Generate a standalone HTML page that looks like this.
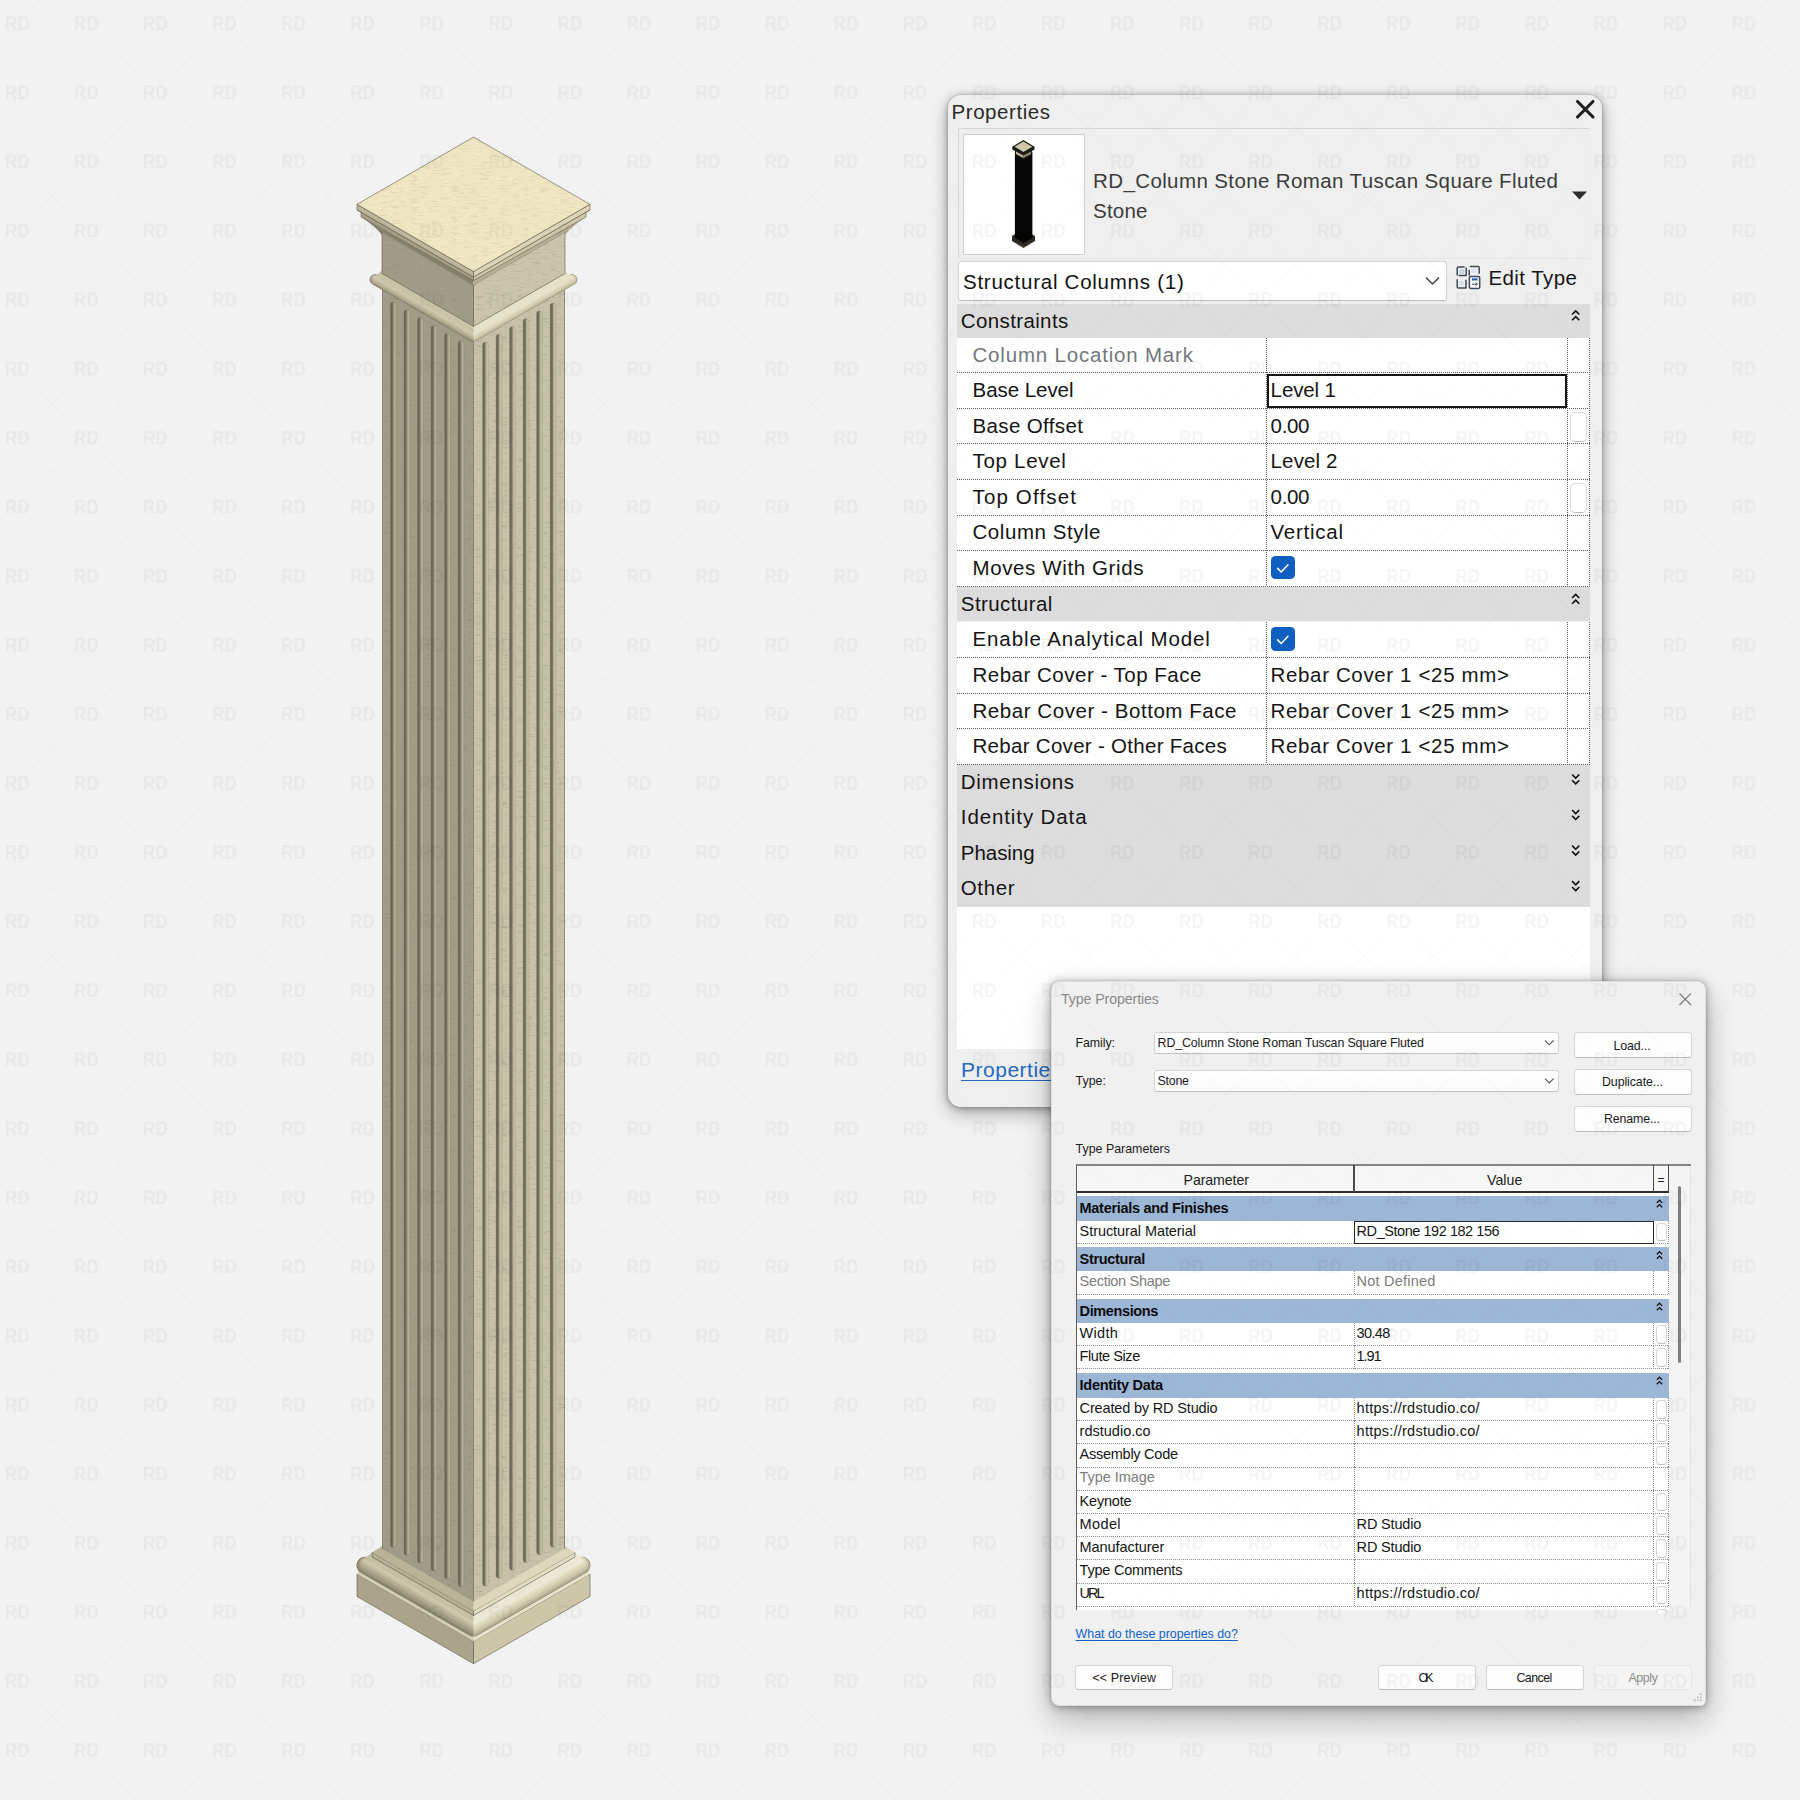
<!DOCTYPE html>
<html lang="en"><head><meta charset="utf-8"><title>RD_Column Stone Roman Tuscan Square Fluted</title>
<style>
html,body{margin:0;padding:0}
body{width:1800px;height:1800px;position:relative;overflow:hidden;background:#f2f2f2;font-family:"Liberation Sans",Arial,sans-serif}
.t{position:absolute;white-space:pre;margin:0;padding:0;display:block}
.b{position:absolute;box-sizing:border-box}
svg{position:absolute;left:0;top:0;overflow:visible}
a.t{text-decoration:none}
</style></head><body>

<svg width="1800" height="1800" viewBox="0 0 1800 1800">
<defs>
<linearGradient id="flL" x1="0" x2="1" y1="0" y2="0"><stop offset="0" stop-color="#5f5b4a"/><stop offset=".38" stop-color="#787460"/><stop offset=".58" stop-color="#a39d85"/><stop offset="1" stop-color="#c4bea4"/></linearGradient>
<linearGradient id="flR" x1="0" x2="1" y1="0" y2="0"><stop offset="0" stop-color="#615d4c"/><stop offset=".4" stop-color="#7c7763"/><stop offset=".62" stop-color="#b3ad93"/><stop offset="1" stop-color="#d9d3b9"/></linearGradient>
<clipPath id="cl"><rect x="300" y="100" width="173.5" height="1600"/></clipPath>
<clipPath id="cr"><rect x="473.5" y="100" width="173.5" height="1600"/></clipPath>
<filter id="grain" x="0" y="0" width="100%" height="100%"><feTurbulence type="fractalNoise" baseFrequency="0.1 0.6" numOctaves="3" seed="7" result="n"/><feColorMatrix in="n" type="matrix" values="0 0 0 0 0.5  0 0 0 0 0.46  0 0 0 0 0.32  0 0 0 -3.0 1.4"/><feComposite in2="SourceGraphic" operator="in"/></filter>
<filter id="grain2" x="0" y="0" width="100%" height="100%"><feTurbulence type="fractalNoise" baseFrequency="0.12 0.55" numOctaves="3" seed="3" result="n"/><feColorMatrix in="n" type="matrix" values="0 0 0 0 0.25  0 0 0 0 0.23  0 0 0 0 0.16  0 0 0 -3.2 1.42"/><feComposite in2="SourceGraphic" operator="in"/></filter>
</defs>
<polygon points="357.0,1574.0 473.5,1641.2 590.0,1574.0 473.5,1506.8" fill="#ddd7bb"/>
<polygon points="357.0,1574.0 473.5,1641.2 473.5,1663.7 357.0,1596.5" fill="#aaa48a" stroke="#5e5947" stroke-width=".8" stroke-opacity=".75" stroke-linejoin="round"/>
<polygon points="590.0,1574.0 473.5,1641.2 473.5,1663.7 590.0,1596.5" fill="#cdc6a9" stroke="#5e5947" stroke-width=".8" stroke-opacity=".75" stroke-linejoin="round"/>
<polygon points="357.0,1574.0 473.5,1641.2 473.5,1636.2 360.0,1570.0" fill="#d3cdb1"/>
<polygon points="590.0,1574.0 473.5,1641.2 473.5,1636.2 587.0,1570.0" fill="#e7e2ca"/>
<g clip-path="url(#cl)">
<path d="M365.2,1565.3 L473.5,1627.8 L581.8,1565.3" fill="none" stroke="#6f6b57" stroke-width="17.3" stroke-linecap="round" stroke-linejoin="round"/>
<path d="M365.2,1565.3 L473.5,1627.8 L581.8,1565.3" fill="none" stroke="#8d8871" stroke-width="16.2" stroke-linecap="round" stroke-linejoin="round"/>
<path d="M365.2,1564.1 L473.5,1626.6 L581.8,1564.1" fill="none" stroke="#a19b82" stroke-width="13.5" stroke-linecap="round" stroke-linejoin="round"/>
<path d="M365.2,1562.7 L473.5,1625.2 L581.8,1562.7" fill="none" stroke="#b3ad93" stroke-width="10" stroke-linecap="round" stroke-linejoin="round"/>
<path d="M365.2,1561.5 L473.5,1624.0 L581.8,1561.5" fill="none" stroke="#c4bea3" stroke-width="6" stroke-linecap="round" stroke-linejoin="round"/>
<path d="M365.2,1560.5 L473.5,1623.0 L581.8,1560.5" fill="none" stroke="#cec8ae" stroke-width="2.6" stroke-linecap="round" stroke-linejoin="round"/>
</g>
<g clip-path="url(#cr)">
<path d="M365.2,1565.3 L473.5,1627.8 L581.8,1565.3" fill="none" stroke="#8a856e" stroke-width="17.3" stroke-linecap="round" stroke-linejoin="round"/>
<path d="M365.2,1565.3 L473.5,1627.8 L581.8,1565.3" fill="none" stroke="#b4ae93" stroke-width="16.2" stroke-linecap="round" stroke-linejoin="round"/>
<path d="M365.2,1564.1 L473.5,1626.6 L581.8,1564.1" fill="none" stroke="#cbc5a9" stroke-width="13.5" stroke-linecap="round" stroke-linejoin="round"/>
<path d="M365.2,1562.7 L473.5,1625.2 L581.8,1562.7" fill="none" stroke="#dbd5ba" stroke-width="10" stroke-linecap="round" stroke-linejoin="round"/>
<path d="M365.2,1561.5 L473.5,1624.0 L581.8,1561.5" fill="none" stroke="#e6e1c9" stroke-width="6" stroke-linecap="round" stroke-linejoin="round"/>
<path d="M365.2,1560.5 L473.5,1623.0 L581.8,1560.5" fill="none" stroke="#eeead6" stroke-width="2.6" stroke-linecap="round" stroke-linejoin="round"/>
</g>
<polygon points="364.5,1558.5 473.5,1621.4 473.5,1610.3 372.5,1552.0" fill="#c6c0a5"/>
<polygon points="582.5,1558.5 473.5,1621.4 473.5,1610.3 574.5,1552.0" fill="#ebe7d2"/>
<polygon points="372.1,1552.5 473.5,1611.0 574.9,1552.5 473.5,1494.0" fill="#c9c3a8"/>
<polygon points="372.1,1552.5 473.5,1611.0 473.5,1615.5 372.1,1557.0" fill="#b5af95" stroke="#5e5947" stroke-width=".8" stroke-opacity=".75" stroke-linejoin="round"/>
<polygon points="574.9,1552.5 473.5,1611.0 473.5,1615.5 574.9,1557.0" fill="#e2dcc3" stroke="#5e5947" stroke-width=".8" stroke-opacity=".75" stroke-linejoin="round"/>
<polygon points="372.1,1552.5 473.5,1611.0 473.5,1599.5 382.5,1546.0" fill="#b9b398"/>
<polygon points="574.9,1552.5 473.5,1611.0 473.5,1599.5 564.5,1546.0" fill="#ddd7bc"/>
<polygon points="382.5,285.5 473.5,338.0 473.5,1601.5 382.5,1549.0" fill="#a09c86"/>
<polygon points="564.5,285.5 473.5,338.0 473.5,1601.5 564.5,1549.0" fill="#c7c2a9"/>
<polygon points="382.5,285.5 473.5,338.0 473.5,1601.5 382.5,1549.0" fill="#000" filter="url(#grain2)" opacity=".35"/>
<polygon points="564.5,285.5 473.5,338.0 473.5,1601.5 564.5,1549.0" fill="#000" filter="url(#grain2)" opacity=".32"/>
<path d="M382.5,285.5 V1549.0 M564.5,285.5 V1549.0 M473.5,338.007 V1601.507" fill="none" stroke="#5e5947" stroke-width=".8" stroke-opacity=".75" stroke-linejoin="round"/>
<rect x="390.50" y="302.0" width="5.6" height="1245.5" rx="2.8" fill="url(#flL)" stroke="#6f6a56" stroke-width=".5" stroke-opacity=".6"/>
<rect x="404.04" y="309.8" width="5.6" height="1245.5" rx="2.8" fill="url(#flL)" stroke="#6f6a56" stroke-width=".5" stroke-opacity=".6"/>
<rect x="417.58" y="317.6" width="5.6" height="1245.5" rx="2.8" fill="url(#flL)" stroke="#6f6a56" stroke-width=".5" stroke-opacity=".6"/>
<rect x="431.12" y="325.4" width="5.6" height="1245.5" rx="2.8" fill="url(#flL)" stroke="#6f6a56" stroke-width=".5" stroke-opacity=".6"/>
<rect x="444.66" y="333.3" width="5.6" height="1245.5" rx="2.8" fill="url(#flL)" stroke="#6f6a56" stroke-width=".5" stroke-opacity=".6"/>
<rect x="458.20" y="341.1" width="5.6" height="1245.5" rx="2.8" fill="url(#flL)" stroke="#6f6a56" stroke-width=".5" stroke-opacity=".6"/>
<rect x="482.60" y="342.0" width="5.6" height="1244.0" rx="2.8" fill="url(#flR)" stroke="#77725c" stroke-width=".5" stroke-opacity=".6"/>
<rect x="496.12" y="334.2" width="5.6" height="1244.0" rx="2.8" fill="url(#flR)" stroke="#77725c" stroke-width=".5" stroke-opacity=".6"/>
<rect x="509.64" y="326.4" width="5.6" height="1244.0" rx="2.8" fill="url(#flR)" stroke="#77725c" stroke-width=".5" stroke-opacity=".6"/>
<rect x="523.16" y="318.6" width="5.6" height="1244.0" rx="2.8" fill="url(#flR)" stroke="#77725c" stroke-width=".5" stroke-opacity=".6"/>
<rect x="536.68" y="310.8" width="5.6" height="1244.0" rx="2.8" fill="url(#flR)" stroke="#77725c" stroke-width=".5" stroke-opacity=".6"/>
<rect x="550.20" y="303.0" width="5.6" height="1244.0" rx="2.8" fill="url(#flR)" stroke="#77725c" stroke-width=".5" stroke-opacity=".6"/>
<g clip-path="url(#cl)">
<path d="M375.0,279.6 L473.5,336.4 L572.0,279.6" fill="none" stroke="#6f6b57" stroke-width="10.6" stroke-linecap="round" stroke-linejoin="round"/>
<path d="M375.0,279.6 L473.5,336.4 L572.0,279.6" fill="none" stroke="#a39d84" stroke-width="9.6" stroke-linecap="round" stroke-linejoin="round"/>
<path d="M375.0,278.8 L473.5,335.6 L572.0,278.8" fill="none" stroke="#b7b196" stroke-width="7.4" stroke-linecap="round" stroke-linejoin="round"/>
<path d="M375.0,278.0 L473.5,334.8 L572.0,278.0" fill="none" stroke="#c5bfa4" stroke-width="4.6" stroke-linecap="round" stroke-linejoin="round"/>
<path d="M375.0,277.4 L473.5,334.2 L572.0,277.4" fill="none" stroke="#cfc9af" stroke-width="2" stroke-linecap="round" stroke-linejoin="round"/>
</g>
<g clip-path="url(#cr)">
<path d="M375.0,279.6 L473.5,336.4 L572.0,279.6" fill="none" stroke="#8a856e" stroke-width="10.6" stroke-linecap="round" stroke-linejoin="round"/>
<path d="M375.0,279.6 L473.5,336.4 L572.0,279.6" fill="none" stroke="#c4bda1" stroke-width="9.6" stroke-linecap="round" stroke-linejoin="round"/>
<path d="M375.0,278.8 L473.5,335.6 L572.0,278.8" fill="none" stroke="#d6cfb3" stroke-width="7.4" stroke-linecap="round" stroke-linejoin="round"/>
<path d="M375.0,278.0 L473.5,334.8 L572.0,278.0" fill="none" stroke="#e0dabf" stroke-width="4.6" stroke-linecap="round" stroke-linejoin="round"/>
<path d="M375.0,277.4 L473.5,334.2 L572.0,277.4" fill="none" stroke="#e8e3cb" stroke-width="2" stroke-linecap="round" stroke-linejoin="round"/>
</g>
<polygon points="375.0,276.5 473.5,333.3 473.5,322.5 382.5,270.0" fill="#c9c3a8"/>
<polygon points="572.0,276.5 473.5,333.3 473.5,322.5 564.5,270.0" fill="#e6e1c9"/>
<polygon points="382.0,232.2 473.5,285.0 473.5,326.3 382.0,273.5" fill="#a09c86" stroke="#5e5947" stroke-width=".8" stroke-opacity=".75" stroke-linejoin="round"/>
<polygon points="565.0,232.2 473.5,285.0 473.5,326.3 565.0,273.5" fill="#cac5ac" stroke="#5e5947" stroke-width=".8" stroke-opacity=".75" stroke-linejoin="round"/>
<polygon points="382.0,232.2 473.5,285.0 473.5,326.3 382.0,273.5" fill="#000" filter="url(#grain2)" opacity=".32"/>
<polygon points="565.0,232.2 473.5,285.0 473.5,326.3 565.0,273.5" fill="#000" filter="url(#grain2)" opacity=".3"/>
<path d="M361.0,217 L473.5,280.5205 L473.5,285.32050000000004 L382.0,231.89999999999998 L382.0,235 Q374.0,225 361.0,217Z" fill="#858069"/>
<path d="M586.0,217 L473.5,280.5205 L473.5,285.32050000000004 L565.0,231.89999999999998 L565.0,235 Q573.0,225 586.0,217Z" fill="#b3ad92"/>
<polygon points="357.0,209.8 473.5,277.1 473.5,280.5 361.0,217.0 361.0,212.0" fill="#a49e84" stroke="#5e5947" stroke-width=".8" stroke-opacity=".75" stroke-linejoin="round"/>
<polygon points="590.0,209.8 473.5,277.1 473.5,280.5 586.0,217.0 586.0,212.0" fill="#cfc8ab" stroke="#5e5947" stroke-width=".8" stroke-opacity=".75" stroke-linejoin="round"/>
<polygon points="357.0,204.3 473.5,271.5 473.5,277.0 357.0,209.8" fill="#bdb69b" stroke="#5e5947" stroke-width=".8" stroke-opacity=".75" stroke-linejoin="round"/>
<polygon points="590.0,204.3 473.5,271.5 473.5,277.0 590.0,209.8" fill="#dbd4b6" stroke="#5e5947" stroke-width=".8" stroke-opacity=".75" stroke-linejoin="round"/>
<polygon points="357.0,204.3 473.5,271.5 590.0,204.3 473.5,137.1" fill="#efe6c3" stroke="#5e5947" stroke-width=".8" stroke-opacity=".75" stroke-linejoin="round"/>
<polygon points="357.0,204.3 473.5,271.5 590.0,204.3 473.5,137.1" fill="#000" filter="url(#grain)" opacity=".35"/>
</svg>
<div class="b" style="left:948.0px;top:95.0px;width:654.0px;height:1012.0px;background:#efefef;border-radius:13px;box-shadow:0 6px 18px rgba(0,0,0,.30),0 1px 7px rgba(0,0,0,.30),0 0 2px rgba(0,0,0,.18);"></div>
<span class="t" style="left:951.5px;top:101.6px;font-size:20.5px;line-height:20.5px;color:#2a2a2a;letter-spacing:0.563px;">Properties</span>
<svg width="1800" height="1800"><path d="M1577.5 101.5L1593 117M1593 101.5L1577.5 117" stroke="#1f1f1f" stroke-width="3.1" stroke-linecap="round" fill="none"/></svg>
<div class="b" style="left:958.0px;top:128.0px;width:632.0px;height:130.5px;border:1px solid #d6d6d6;border-right-color:#ececec;border-bottom-color:#e6e6e6;border-radius:2px;"></div>
<div class="b" style="left:963.0px;top:134.0px;width:121.5px;height:121.0px;background:#fff;border:1px solid #cdcdcd;"></div>
<svg width="1800" height="1800"><g>
<polygon points="1012,236 1023.5,229.5 1035,236 1035,241 1023.5,248 1012,241" fill="#2a281f"/>
<polygon points="1014.9,152 1032.4,152 1032.4,238 1023.6,243 1014.9,238" fill="#050505"/>
<polygon points="1012.3,146.7 1023.4,140 1034.5,146.7 1034.5,149.5 1032,151 1032,155 1023.4,160 1015,155 1015,151 1012.3,149.5" fill="#1b1a14"/>
<polygon points="1014.5,146.7 1023.4,141.5 1032.3,146.7 1023.4,152" fill="#cfc8ab"/>
<polygon points="1016,151.5 1023.4,155.6 1023.4,158 1016,154" fill="#bdb69b"/>
<polygon points="1031,151.5 1023.4,155.6 1023.4,158 1031,154" fill="#8d8870"/>
<path d="M1014 242l9.5 5.5 9.5-5.5" stroke="#8d8870" stroke-width="1" fill="none" stroke-dasharray="1.5 1.5"/>
</g></svg>
<span class="t" style="left:1093.0px;top:170.6px;font-size:20.5px;line-height:20.5px;color:#3b3b3b;letter-spacing:0.391px;">RD_Column Stone Roman Tuscan Square Fluted</span>
<span class="t" style="left:1093.0px;top:200.6px;font-size:20.5px;line-height:20.5px;color:#3b3b3b;letter-spacing:0.207px;">Stone</span>
<svg width="1800" height="1800"><polygon points="1572,191.5 1587,191.5 1579.5,199.5" fill="#2e2e2e"/></svg>
<div class="b" style="left:958.0px;top:261.0px;width:489.0px;height:39.5px;background:#fff;border:1px solid #d2d2d2;border-bottom-color:#bdbdbd;border-radius:3px;"></div>
<span class="t" style="left:963.0px;top:271.6px;font-size:20.5px;line-height:20.5px;color:#111;letter-spacing:0.745px;">Structural Columns (1)</span>
<svg width="1800" height="1800"><path d="M1426 277.6l6.5 6.4 6.5-6.4" stroke="#4a4a4a" stroke-width="1.5" fill="none"/></svg>
<svg width="1800" height="1800"><g fill="none" stroke="#3f4a57" stroke-width="1.5" stroke-linejoin="round">
<path d="M1457.2 275.5v-7.2q0-1.2 1.2-1.2h6.2M1466.2 267.4v8.2h-7.6" />
<path d="M1469.8 266.5h8.4q1 0 1 1v6.3M1469.2 275.8v-6" />
<path d="M1457.2 279.3v7.6q0 1 1 1h7.8v-8.2" />
<rect x="1469.4" y="276.4" width="10.3" height="12" rx="1.3" fill="#fdfdfd"/>
</g>
<rect x="1459.3" y="269.3" width="5" height="5" fill="#c9d2e2"/><rect x="1471.5" y="269" width="4.6" height="4.2" fill="#dde3ee"/><rect x="1459.3" y="281" width="4.8" height="4.8" fill="#dde3ee"/>
<rect x="1472" y="278.3" width="5.6" height="2.2" fill="#2c62b4"/>
<path d="M1472 284.2h5.2M1475.6 282.6l1.8 1.6-1.8 1.6" stroke="#3f4a57" stroke-width="1" fill="none"/>
</svg>
<span class="t" style="left:1488.4px;top:268.1px;font-size:20.5px;line-height:20.5px;color:#151515;letter-spacing:0.438px;">Edit Type</span>
<div class="b" style="left:957.0px;top:303.5px;width:633.0px;height:34.5px;background:#dcdcdc;"></div>
<span class="t" style="left:960.8px;top:310.7px;font-size:20.5px;line-height:20.5px;color:#141414;letter-spacing:0.372px;">Constraints</span>
<div class="b" style="left:957.0px;top:337.5px;width:633.0px;height:248.8px;background:#fff;"></div>
<span class="t" style="left:972.5px;top:344.6px;font-size:20.5px;line-height:20.5px;color:#73777d;letter-spacing:0.806px;">Column Location Mark</span>
<div class="b" style="left:957.0px;top:372.2px;width:633.0px;height:1.0px;background:repeating-linear-gradient(90deg,#5a5a5a 0 1px,transparent 1px 2px);"></div>
<span class="t" style="left:972.5px;top:380.2px;font-size:20.5px;line-height:20.5px;color:#141414;letter-spacing:-0.048px;">Base Level</span>
<span class="t" style="left:1270.6px;top:380.2px;font-size:20.5px;line-height:20.5px;color:#151515;letter-spacing:-0.118px;">Level 1</span>
<div class="b" style="left:957.0px;top:407.8px;width:633.0px;height:1.0px;background:repeating-linear-gradient(90deg,#5a5a5a 0 1px,transparent 1px 2px);"></div>
<span class="t" style="left:972.5px;top:415.7px;font-size:20.5px;line-height:20.5px;color:#141414;letter-spacing:0.367px;">Base Offset</span>
<span class="t" style="left:1270.6px;top:415.7px;font-size:20.5px;line-height:20.5px;color:#151515;letter-spacing:-0.367px;">0.00</span>
<div class="b" style="left:957.0px;top:443.4px;width:633.0px;height:1.0px;background:repeating-linear-gradient(90deg,#5a5a5a 0 1px,transparent 1px 2px);"></div>
<span class="t" style="left:972.5px;top:451.3px;font-size:20.5px;line-height:20.5px;color:#141414;letter-spacing:0.705px;">Top Level</span>
<span class="t" style="left:1270.6px;top:451.3px;font-size:20.5px;line-height:20.5px;color:#151515;letter-spacing:0.116px;">Level 2</span>
<div class="b" style="left:957.0px;top:478.9px;width:633.0px;height:1.0px;background:repeating-linear-gradient(90deg,#5a5a5a 0 1px,transparent 1px 2px);"></div>
<span class="t" style="left:972.5px;top:486.8px;font-size:20.5px;line-height:20.5px;color:#141414;letter-spacing:1.148px;">Top Offset</span>
<span class="t" style="left:1270.6px;top:486.8px;font-size:20.5px;line-height:20.5px;color:#151515;letter-spacing:-0.367px;">0.00</span>
<div class="b" style="left:957.0px;top:514.5px;width:633.0px;height:1.0px;background:repeating-linear-gradient(90deg,#5a5a5a 0 1px,transparent 1px 2px);"></div>
<span class="t" style="left:972.5px;top:522.4px;font-size:20.5px;line-height:20.5px;color:#141414;letter-spacing:0.554px;">Column Style</span>
<span class="t" style="left:1270.6px;top:522.4px;font-size:20.5px;line-height:20.5px;color:#151515;letter-spacing:0.739px;">Vertical</span>
<div class="b" style="left:957.0px;top:550.0px;width:633.0px;height:1.0px;background:repeating-linear-gradient(90deg,#5a5a5a 0 1px,transparent 1px 2px);"></div>
<span class="t" style="left:972.5px;top:557.9px;font-size:20.5px;line-height:20.5px;color:#141414;letter-spacing:0.617px;">Moves With Grids</span>
<div class="b" style="left:1271.0px;top:555.8px;width:24.0px;height:23.6px;background:#0f5fc0;border-radius:4.5px;"></div>
<div class="b" style="left:957.0px;top:585.5px;width:633.0px;height:1.0px;background:repeating-linear-gradient(90deg,#5a5a5a 0 1px,transparent 1px 2px);"></div>
<div class="b" style="left:1265.5px;top:337.5px;width:1.0px;height:248.8px;background:repeating-linear-gradient(180deg,#5a5a5a 0 1px,transparent 1px 2px);"></div>
<div class="b" style="left:1566.5px;top:337.5px;width:1.0px;height:248.8px;background:repeating-linear-gradient(180deg,#5a5a5a 0 1px,transparent 1px 2px);"></div>
<div class="b" style="left:1588.5px;top:337.5px;width:1.0px;height:248.8px;background:repeating-linear-gradient(180deg,#5a5a5a 0 1px,transparent 1px 2px);"></div>
<div class="b" style="left:1267.0px;top:374.4px;width:299.5px;height:34.0px;border:2px solid #161616;"></div>
<div class="b" style="left:1569.6px;top:412.2px;width:17.6px;height:29.5px;background:#fff;border:1px solid #d9d9d9;border-bottom:1.5px solid #bcbcbc;border-radius:5px;"></div>
<div class="b" style="left:1569.6px;top:483.3px;width:17.6px;height:29.5px;background:#fff;border:1px solid #d9d9d9;border-bottom:1.5px solid #bcbcbc;border-radius:5px;"></div>
<div class="b" style="left:957.0px;top:586.9px;width:633.0px;height:34.5px;background:#dcdcdc;"></div>
<span class="t" style="left:960.8px;top:594.2px;font-size:20.5px;line-height:20.5px;color:#141414;letter-spacing:0.419px;">Structural</span>
<div class="b" style="left:957.0px;top:622.3px;width:633.0px;height:142.2px;background:#fff;"></div>
<span class="t" style="left:972.5px;top:629.4px;font-size:20.5px;line-height:20.5px;color:#141414;letter-spacing:0.897px;">Enable Analytical Model</span>
<div class="b" style="left:1271.0px;top:627.3px;width:24.0px;height:23.6px;background:#0f5fc0;border-radius:4.5px;"></div>
<div class="b" style="left:957.0px;top:657.0px;width:633.0px;height:1.0px;background:repeating-linear-gradient(90deg,#5a5a5a 0 1px,transparent 1px 2px);"></div>
<span class="t" style="left:972.5px;top:665.0px;font-size:20.5px;line-height:20.5px;color:#141414;letter-spacing:0.501px;">Rebar Cover - Top Face</span>
<span class="t" style="left:1270.6px;top:665.0px;font-size:20.5px;line-height:20.5px;color:#151515;letter-spacing:0.635px;">Rebar Cover 1 &lt;25 mm&gt;</span>
<div class="b" style="left:957.0px;top:692.6px;width:633.0px;height:1.0px;background:repeating-linear-gradient(90deg,#5a5a5a 0 1px,transparent 1px 2px);"></div>
<span class="t" style="left:972.5px;top:700.5px;font-size:20.5px;line-height:20.5px;color:#141414;letter-spacing:0.556px;">Rebar Cover - Bottom Face</span>
<span class="t" style="left:1270.6px;top:700.5px;font-size:20.5px;line-height:20.5px;color:#151515;letter-spacing:0.635px;">Rebar Cover 1 &lt;25 mm&gt;</span>
<div class="b" style="left:957.0px;top:728.1px;width:633.0px;height:1.0px;background:repeating-linear-gradient(90deg,#5a5a5a 0 1px,transparent 1px 2px);"></div>
<span class="t" style="left:972.5px;top:736.1px;font-size:20.5px;line-height:20.5px;color:#141414;letter-spacing:0.295px;">Rebar Cover - Other Faces</span>
<span class="t" style="left:1270.6px;top:736.1px;font-size:20.5px;line-height:20.5px;color:#151515;letter-spacing:0.635px;">Rebar Cover 1 &lt;25 mm&gt;</span>
<div class="b" style="left:957.0px;top:763.7px;width:633.0px;height:1.0px;background:repeating-linear-gradient(90deg,#5a5a5a 0 1px,transparent 1px 2px);"></div>
<div class="b" style="left:1265.5px;top:622.3px;width:1.0px;height:142.2px;background:repeating-linear-gradient(180deg,#5a5a5a 0 1px,transparent 1px 2px);"></div>
<div class="b" style="left:1566.5px;top:622.3px;width:1.0px;height:142.2px;background:repeating-linear-gradient(180deg,#5a5a5a 0 1px,transparent 1px 2px);"></div>
<div class="b" style="left:1588.5px;top:622.3px;width:1.0px;height:142.2px;background:repeating-linear-gradient(180deg,#5a5a5a 0 1px,transparent 1px 2px);"></div>
<div class="b" style="left:957.0px;top:764.5px;width:633.0px;height:36.0px;background:#dcdcdc;"></div>
<span class="t" style="left:960.8px;top:771.7px;font-size:20.5px;line-height:20.5px;color:#141414;letter-spacing:0.689px;">Dimensions</span>
<div class="b" style="left:957.0px;top:800.0px;width:633.0px;height:36.0px;background:#dcdcdc;"></div>
<span class="t" style="left:960.8px;top:807.3px;font-size:20.5px;line-height:20.5px;color:#141414;letter-spacing:0.892px;">Identity Data</span>
<div class="b" style="left:957.0px;top:835.6px;width:633.0px;height:36.0px;background:#dcdcdc;"></div>
<span class="t" style="left:960.8px;top:842.8px;font-size:20.5px;line-height:20.5px;color:#141414;letter-spacing:-0.048px;">Phasing</span>
<div class="b" style="left:957.0px;top:871.1px;width:633.0px;height:36.0px;background:#dcdcdc;"></div>
<span class="t" style="left:960.8px;top:878.4px;font-size:20.5px;line-height:20.5px;color:#141414;letter-spacing:0.632px;">Other</span>
<div class="b" style="left:957.0px;top:907.0px;width:633.0px;height:142.3px;background:#fff;"></div>
<svg width="1800" height="1800"><path d="M1572.1000000000001 314.5l3.6-3.6 3.6 3.6M1572.1000000000001 320.29999999999995l3.6-3.6 3.6 3.6" stroke="#111" stroke-width="1.6" fill="none"/><path d="M1277.6 568.4l3.6 3.6 6.8-7.2" stroke="#fff" stroke-width="1.5" fill="none" stroke-linecap="round" stroke-linejoin="round"/><path d="M1572.1000000000001 597.9499999999999l3.6-3.6 3.6 3.6M1572.1000000000001 603.7499999999999l3.6-3.6 3.6 3.6" stroke="#111" stroke-width="1.6" fill="none"/><path d="M1277.6 639.8999999999999l3.6 3.6 6.8-7.2" stroke="#fff" stroke-width="1.5" fill="none" stroke-linecap="round" stroke-linejoin="round"/><path d="M1572.1000000000001 774.4999999999998l3.6 3.6 3.6-3.6M1572.1000000000001 780.2999999999997l3.6 3.6 3.6-3.6" stroke="#111" stroke-width="1.6" fill="none"/><path d="M1572.1000000000001 810.0499999999997l3.6 3.6 3.6-3.6M1572.1000000000001 815.8499999999997l3.6 3.6 3.6-3.6" stroke="#111" stroke-width="1.6" fill="none"/><path d="M1572.1000000000001 845.5999999999998l3.6 3.6 3.6-3.6M1572.1000000000001 851.3999999999997l3.6 3.6 3.6-3.6" stroke="#111" stroke-width="1.6" fill="none"/><path d="M1572.1000000000001 881.1499999999997l3.6 3.6 3.6-3.6M1572.1000000000001 886.9499999999997l3.6 3.6 3.6-3.6" stroke="#111" stroke-width="1.6" fill="none"/></svg>
<a class="t" style="left:961.0px;top:1058.9px;font-size:21px;line-height:21px;color:#2469c4;letter-spacing:0.505px;text-decoration:underline;text-decoration-thickness:1.4px;text-underline-offset:2.5px;text-decoration-skip-ink:none;">Properties help</a>
<div class="b" style="left:1051.0px;top:981.0px;width:654.5px;height:724.5px;background:#f0f0f0;border-radius:8px 8px 5px 8px;border:1px solid #dcdfdc;box-shadow:0 12px 30px rgba(0,0,0,.28),0 1px 8px rgba(0,0,0,.32),0 0 2px rgba(0,0,0,.18);"></div>
<span class="t" style="left:1061.0px;top:992.4px;font-size:14.2px;line-height:14.2px;color:#8a8a8a;letter-spacing:-0.103px;">Type Properties</span>
<svg width="1800" height="1800"><path d="M1679.5 993.3L1691 1005M1691 993.3L1679.5 1005" stroke="#777" stroke-width="1.15" fill="none"/></svg>
<span class="t" style="left:1075.6px;top:1036.5px;font-size:12.4px;line-height:12.4px;color:#1a1a1a;letter-spacing:-0.093px;">Family:</span>
<span class="t" style="left:1075.6px;top:1075.1px;font-size:12.4px;line-height:12.4px;color:#1a1a1a;letter-spacing:0.018px;">Type:</span>
<div class="b" style="left:1153.6px;top:1032.0px;width:405.0px;height:21.6px;background:linear-gradient(#fff,#fafafa);border:1px solid #d4d4d4;border-bottom-color:#c2c2c2;border-radius:3px;"></div>
<div class="b" style="left:1153.6px;top:1070.0px;width:405.0px;height:21.6px;background:linear-gradient(#fff,#fafafa);border:1px solid #d4d4d4;border-bottom-color:#c2c2c2;border-radius:3px;"></div>
<span class="t" style="left:1157.6px;top:1036.5px;font-size:12.4px;line-height:12.4px;color:#1a1a1a;letter-spacing:-0.126px;">RD_Column Stone Roman Tuscan Square Fluted</span>
<span class="t" style="left:1157.6px;top:1075.1px;font-size:12.4px;line-height:12.4px;color:#1a1a1a;letter-spacing:-0.251px;">Stone</span>
<svg width="1800" height="1800"><path d="M1545 1040.4l4.3 4.4 4.3-4.4M1545 1078.6l4.3 4.4 4.3-4.4" stroke="#555" stroke-width="1.15" fill="none"/></svg>
<div class="b" style="left:1573.6px;top:1032.4px;width:118.4px;height:25.6px;background:#fdfdfd;border:1px solid #d5d5d5;border-bottom-color:#bdbdbd;border-radius:4px;"></div>
<span class="t" style="left:1613.6px;top:1039.5px;font-size:12.4px;line-height:12.4px;color:#1a1a1a;letter-spacing:-0.153px;">Load...</span>
<div class="b" style="left:1573.6px;top:1069.0px;width:118.4px;height:25.6px;background:#fdfdfd;border:1px solid #d5d5d5;border-bottom-color:#bdbdbd;border-radius:4px;"></div>
<span class="t" style="left:1602.0px;top:1076.1px;font-size:12.4px;line-height:12.4px;color:#1a1a1a;letter-spacing:-0.094px;">Duplicate...</span>
<div class="b" style="left:1573.6px;top:1106.0px;width:118.4px;height:25.6px;background:#fdfdfd;border:1px solid #d5d5d5;border-bottom-color:#bdbdbd;border-radius:4px;"></div>
<span class="t" style="left:1604.0px;top:1113.1px;font-size:12.4px;line-height:12.4px;color:#1a1a1a;letter-spacing:-0.151px;">Rename...</span>
<span class="t" style="left:1075.6px;top:1142.5px;font-size:12.4px;line-height:12.4px;color:#1a1a1a;">Type Parameters</span>
<div class="b" style="left:1076.0px;top:1165.0px;width:614.6px;height:445.0px;background:#fff;"></div>
<div class="b" style="left:1668.6px;top:1165.0px;width:22.0px;height:445.0px;background:#f3f3f3;border-right:1px solid #e2e2e2;"></div>
<div class="b" style="left:1076.0px;top:1165.0px;width:592.6px;height:27.6px;background:#f6f6f6;"></div>
<div class="b" style="left:1076.0px;top:1164.4px;width:614.6px;height:1.6px;background:#858585;"></div>
<div class="b" style="left:1076.0px;top:1191.2px;width:592.6px;height:1.7px;background:#2f2f2f;"></div>
<div class="b" style="left:1075.6px;top:1165.0px;width:1.7px;height:445.0px;background:#5c5c5c;"></div>
<div class="b" style="left:1353.2px;top:1165.0px;width:1.5px;height:27.0px;background:#4a4a4a;"></div>
<div class="b" style="left:1652.7px;top:1165.0px;width:1.5px;height:27.0px;background:#4a4a4a;"></div>
<div class="b" style="left:1667.8px;top:1165.0px;width:1.5px;height:27.0px;background:#4a4a4a;"></div>
<span class="t" style="left:1183.6px;top:1173.2px;font-size:14.2px;line-height:14.2px;color:#1c1c1c;letter-spacing:-0.112px;">Parameter</span>
<span class="t" style="left:1487.0px;top:1173.2px;font-size:14.2px;line-height:14.2px;color:#1c1c1c;letter-spacing:0.034px;">Value</span>
<span class="t" style="left:1657.6px;top:1174.0px;font-size:12px;line-height:12px;color:#1c1c1c;">=</span>
<div class="b" style="left:1077.0px;top:1195.5px;width:591.6px;height:25.0px;background:#9cb6d6;"></div>
<span class="t" style="left:1079.6px;top:1200.6px;font-size:14.5px;line-height:14.5px;color:#0b0b0b;font-weight:700;letter-spacing:-0.306px;">Materials and Finishes</span>
<span class="t" style="left:1079.6px;top:1223.6px;font-size:14.5px;line-height:14.5px;color:#151515;letter-spacing:-0.070px;">Structural Material</span>
<div class="b" style="left:1077.0px;top:1242.7px;width:591.6px;height:1.0px;background:repeating-linear-gradient(90deg,#8e8e8e 0 1px,transparent 1px 2px);"></div>
<div class="b" style="left:1353.5px;top:1220.5px;width:1.0px;height:23.0px;background:repeating-linear-gradient(180deg,#8e8e8e 0 1px,transparent 1px 2px);"></div>
<div class="b" style="left:1653.0px;top:1220.5px;width:1.0px;height:23.0px;background:repeating-linear-gradient(180deg,#8e8e8e 0 1px,transparent 1px 2px);"></div>
<div class="b" style="left:1668.1px;top:1220.5px;width:1.0px;height:23.0px;background:repeating-linear-gradient(180deg,#8e8e8e 0 1px,transparent 1px 2px);"></div>
<div class="b" style="left:1655.6px;top:1222.7px;width:11.6px;height:18.6px;background:#fff;border:1px solid #d6d6d6;border-bottom-color:#bfbfbf;border-radius:4px;"></div>
<div class="b" style="left:1353.6px;top:1220.8px;width:300.0px;height:22.8px;border:1.7px solid #262626;background:#fff;"></div>
<span class="t" style="left:1356.6px;top:1223.7px;font-size:14.5px;line-height:14.5px;color:#151515;letter-spacing:-0.451px;">RD_Stone 192 182 156</span>
<div class="b" style="left:1077.0px;top:1247.0px;width:591.6px;height:24.2px;background:#9cb6d6;"></div>
<span class="t" style="left:1079.6px;top:1252.1px;font-size:14.5px;line-height:14.5px;color:#0b0b0b;font-weight:700;letter-spacing:-0.315px;">Structural</span>
<span class="t" style="left:1079.6px;top:1274.3px;font-size:14.5px;line-height:14.5px;color:#7d7d7d;letter-spacing:-0.302px;">Section Shape</span>
<span class="t" style="left:1356.6px;top:1274.3px;font-size:14.5px;line-height:14.5px;color:#7d7d7d;letter-spacing:0.223px;">Not Defined</span>
<div class="b" style="left:1077.0px;top:1294.0px;width:591.6px;height:1.0px;background:repeating-linear-gradient(90deg,#8e8e8e 0 1px,transparent 1px 2px);"></div>
<div class="b" style="left:1353.5px;top:1271.2px;width:1.0px;height:23.6px;background:repeating-linear-gradient(180deg,#8e8e8e 0 1px,transparent 1px 2px);"></div>
<div class="b" style="left:1653.0px;top:1271.2px;width:1.0px;height:23.6px;background:repeating-linear-gradient(180deg,#8e8e8e 0 1px,transparent 1px 2px);"></div>
<div class="b" style="left:1668.1px;top:1271.2px;width:1.0px;height:23.6px;background:repeating-linear-gradient(180deg,#8e8e8e 0 1px,transparent 1px 2px);"></div>
<div class="b" style="left:1077.0px;top:1298.5px;width:591.6px;height:24.0px;background:#9cb6d6;"></div>
<span class="t" style="left:1079.6px;top:1303.6px;font-size:14.5px;line-height:14.5px;color:#0b0b0b;font-weight:700;letter-spacing:-0.378px;">Dimensions</span>
<span class="t" style="left:1079.6px;top:1325.6px;font-size:14.5px;line-height:14.5px;color:#151515;letter-spacing:0.309px;">Width</span>
<span class="t" style="left:1356.6px;top:1325.6px;font-size:14.5px;line-height:14.5px;color:#151515;letter-spacing:-0.647px;">30.48</span>
<div class="b" style="left:1077.0px;top:1345.1px;width:591.6px;height:1.0px;background:repeating-linear-gradient(90deg,#8e8e8e 0 1px,transparent 1px 2px);"></div>
<div class="b" style="left:1353.5px;top:1322.5px;width:1.0px;height:23.4px;background:repeating-linear-gradient(180deg,#8e8e8e 0 1px,transparent 1px 2px);"></div>
<div class="b" style="left:1653.0px;top:1322.5px;width:1.0px;height:23.4px;background:repeating-linear-gradient(180deg,#8e8e8e 0 1px,transparent 1px 2px);"></div>
<div class="b" style="left:1668.1px;top:1322.5px;width:1.0px;height:23.4px;background:repeating-linear-gradient(180deg,#8e8e8e 0 1px,transparent 1px 2px);"></div>
<div class="b" style="left:1655.6px;top:1324.7px;width:11.6px;height:19.0px;background:#fff;border:1px solid #d6d6d6;border-bottom-color:#bfbfbf;border-radius:4px;"></div>
<span class="t" style="left:1079.6px;top:1349.0px;font-size:14.5px;line-height:14.5px;color:#151515;letter-spacing:-0.430px;">Flute Size</span>
<span class="t" style="left:1356.6px;top:1349.0px;font-size:14.5px;line-height:14.5px;color:#151515;letter-spacing:-1.074px;">1.91</span>
<div class="b" style="left:1077.0px;top:1368.3px;width:591.6px;height:1.0px;background:repeating-linear-gradient(90deg,#8e8e8e 0 1px,transparent 1px 2px);"></div>
<div class="b" style="left:1353.5px;top:1345.9px;width:1.0px;height:23.2px;background:repeating-linear-gradient(180deg,#8e8e8e 0 1px,transparent 1px 2px);"></div>
<div class="b" style="left:1653.0px;top:1345.9px;width:1.0px;height:23.2px;background:repeating-linear-gradient(180deg,#8e8e8e 0 1px,transparent 1px 2px);"></div>
<div class="b" style="left:1668.1px;top:1345.9px;width:1.0px;height:23.2px;background:repeating-linear-gradient(180deg,#8e8e8e 0 1px,transparent 1px 2px);"></div>
<div class="b" style="left:1655.6px;top:1348.1px;width:11.6px;height:18.8px;background:#fff;border:1px solid #d6d6d6;border-bottom-color:#bfbfbf;border-radius:4px;"></div>
<div class="b" style="left:1077.0px;top:1372.5px;width:591.6px;height:25.2px;background:#9cb6d6;"></div>
<span class="t" style="left:1079.6px;top:1377.6px;font-size:14.5px;line-height:14.5px;color:#0b0b0b;font-weight:700;letter-spacing:-0.300px;">Identity Data</span>
<span class="t" style="left:1079.6px;top:1400.8px;font-size:14.5px;line-height:14.5px;color:#151515;letter-spacing:-0.160px;">Created by RD Studio</span>
<span class="t" style="left:1356.6px;top:1400.8px;font-size:14.5px;line-height:14.5px;color:#151515;letter-spacing:0.238px;">https://rdstudio.co/</span>
<div class="b" style="left:1077.0px;top:1420.1px;width:591.6px;height:1.0px;background:repeating-linear-gradient(90deg,#8e8e8e 0 1px,transparent 1px 2px);"></div>
<div class="b" style="left:1353.5px;top:1397.7px;width:1.0px;height:23.2px;background:repeating-linear-gradient(180deg,#8e8e8e 0 1px,transparent 1px 2px);"></div>
<div class="b" style="left:1653.0px;top:1397.7px;width:1.0px;height:23.2px;background:repeating-linear-gradient(180deg,#8e8e8e 0 1px,transparent 1px 2px);"></div>
<div class="b" style="left:1668.1px;top:1397.7px;width:1.0px;height:23.2px;background:repeating-linear-gradient(180deg,#8e8e8e 0 1px,transparent 1px 2px);"></div>
<div class="b" style="left:1655.6px;top:1399.9px;width:11.6px;height:18.8px;background:#fff;border:1px solid #d6d6d6;border-bottom-color:#bfbfbf;border-radius:4px;"></div>
<span class="t" style="left:1079.6px;top:1424.0px;font-size:14.5px;line-height:14.5px;color:#151515;letter-spacing:0.007px;">rdstudio.co</span>
<span class="t" style="left:1356.6px;top:1424.0px;font-size:14.5px;line-height:14.5px;color:#151515;letter-spacing:0.238px;">https://rdstudio.co/</span>
<div class="b" style="left:1077.0px;top:1443.3px;width:591.6px;height:1.0px;background:repeating-linear-gradient(90deg,#8e8e8e 0 1px,transparent 1px 2px);"></div>
<div class="b" style="left:1353.5px;top:1420.9px;width:1.0px;height:23.2px;background:repeating-linear-gradient(180deg,#8e8e8e 0 1px,transparent 1px 2px);"></div>
<div class="b" style="left:1653.0px;top:1420.9px;width:1.0px;height:23.2px;background:repeating-linear-gradient(180deg,#8e8e8e 0 1px,transparent 1px 2px);"></div>
<div class="b" style="left:1668.1px;top:1420.9px;width:1.0px;height:23.2px;background:repeating-linear-gradient(180deg,#8e8e8e 0 1px,transparent 1px 2px);"></div>
<div class="b" style="left:1655.6px;top:1423.1px;width:11.6px;height:18.8px;background:#fff;border:1px solid #d6d6d6;border-bottom-color:#bfbfbf;border-radius:4px;"></div>
<span class="t" style="left:1079.6px;top:1447.2px;font-size:14.5px;line-height:14.5px;color:#151515;letter-spacing:-0.262px;">Assembly Code</span>
<div class="b" style="left:1077.0px;top:1466.5px;width:591.6px;height:1.0px;background:repeating-linear-gradient(90deg,#8e8e8e 0 1px,transparent 1px 2px);"></div>
<div class="b" style="left:1353.5px;top:1444.1px;width:1.0px;height:23.2px;background:repeating-linear-gradient(180deg,#8e8e8e 0 1px,transparent 1px 2px);"></div>
<div class="b" style="left:1653.0px;top:1444.1px;width:1.0px;height:23.2px;background:repeating-linear-gradient(180deg,#8e8e8e 0 1px,transparent 1px 2px);"></div>
<div class="b" style="left:1668.1px;top:1444.1px;width:1.0px;height:23.2px;background:repeating-linear-gradient(180deg,#8e8e8e 0 1px,transparent 1px 2px);"></div>
<div class="b" style="left:1655.6px;top:1446.3px;width:11.6px;height:18.8px;background:#fff;border:1px solid #d6d6d6;border-bottom-color:#bfbfbf;border-radius:4px;"></div>
<span class="t" style="left:1079.6px;top:1470.4px;font-size:14.5px;line-height:14.5px;color:#7d7d7d;letter-spacing:-0.063px;">Type Image</span>
<div class="b" style="left:1077.0px;top:1489.7px;width:591.6px;height:1.0px;background:repeating-linear-gradient(90deg,#8e8e8e 0 1px,transparent 1px 2px);"></div>
<div class="b" style="left:1353.5px;top:1467.3px;width:1.0px;height:23.2px;background:repeating-linear-gradient(180deg,#8e8e8e 0 1px,transparent 1px 2px);"></div>
<div class="b" style="left:1653.0px;top:1467.3px;width:1.0px;height:23.2px;background:repeating-linear-gradient(180deg,#8e8e8e 0 1px,transparent 1px 2px);"></div>
<div class="b" style="left:1668.1px;top:1467.3px;width:1.0px;height:23.2px;background:repeating-linear-gradient(180deg,#8e8e8e 0 1px,transparent 1px 2px);"></div>
<span class="t" style="left:1079.6px;top:1493.6px;font-size:14.5px;line-height:14.5px;color:#151515;letter-spacing:-0.201px;">Keynote</span>
<div class="b" style="left:1077.0px;top:1512.9px;width:591.6px;height:1.0px;background:repeating-linear-gradient(90deg,#8e8e8e 0 1px,transparent 1px 2px);"></div>
<div class="b" style="left:1353.5px;top:1490.5px;width:1.0px;height:23.2px;background:repeating-linear-gradient(180deg,#8e8e8e 0 1px,transparent 1px 2px);"></div>
<div class="b" style="left:1653.0px;top:1490.5px;width:1.0px;height:23.2px;background:repeating-linear-gradient(180deg,#8e8e8e 0 1px,transparent 1px 2px);"></div>
<div class="b" style="left:1668.1px;top:1490.5px;width:1.0px;height:23.2px;background:repeating-linear-gradient(180deg,#8e8e8e 0 1px,transparent 1px 2px);"></div>
<div class="b" style="left:1655.6px;top:1492.7px;width:11.6px;height:18.8px;background:#fff;border:1px solid #d6d6d6;border-bottom-color:#bfbfbf;border-radius:4px;"></div>
<span class="t" style="left:1079.6px;top:1516.8px;font-size:14.5px;line-height:14.5px;color:#151515;letter-spacing:0.376px;">Model</span>
<span class="t" style="left:1356.6px;top:1516.8px;font-size:14.5px;line-height:14.5px;color:#151515;letter-spacing:-0.173px;">RD Studio</span>
<div class="b" style="left:1077.0px;top:1536.1px;width:591.6px;height:1.0px;background:repeating-linear-gradient(90deg,#8e8e8e 0 1px,transparent 1px 2px);"></div>
<div class="b" style="left:1353.5px;top:1513.7px;width:1.0px;height:23.2px;background:repeating-linear-gradient(180deg,#8e8e8e 0 1px,transparent 1px 2px);"></div>
<div class="b" style="left:1653.0px;top:1513.7px;width:1.0px;height:23.2px;background:repeating-linear-gradient(180deg,#8e8e8e 0 1px,transparent 1px 2px);"></div>
<div class="b" style="left:1668.1px;top:1513.7px;width:1.0px;height:23.2px;background:repeating-linear-gradient(180deg,#8e8e8e 0 1px,transparent 1px 2px);"></div>
<div class="b" style="left:1655.6px;top:1515.9px;width:11.6px;height:18.8px;background:#fff;border:1px solid #d6d6d6;border-bottom-color:#bfbfbf;border-radius:4px;"></div>
<span class="t" style="left:1079.6px;top:1540.0px;font-size:14.5px;line-height:14.5px;color:#151515;letter-spacing:-0.066px;">Manufacturer</span>
<span class="t" style="left:1356.6px;top:1540.0px;font-size:14.5px;line-height:14.5px;color:#151515;letter-spacing:-0.173px;">RD Studio</span>
<div class="b" style="left:1077.0px;top:1559.3px;width:591.6px;height:1.0px;background:repeating-linear-gradient(90deg,#8e8e8e 0 1px,transparent 1px 2px);"></div>
<div class="b" style="left:1353.5px;top:1536.9px;width:1.0px;height:23.2px;background:repeating-linear-gradient(180deg,#8e8e8e 0 1px,transparent 1px 2px);"></div>
<div class="b" style="left:1653.0px;top:1536.9px;width:1.0px;height:23.2px;background:repeating-linear-gradient(180deg,#8e8e8e 0 1px,transparent 1px 2px);"></div>
<div class="b" style="left:1668.1px;top:1536.9px;width:1.0px;height:23.2px;background:repeating-linear-gradient(180deg,#8e8e8e 0 1px,transparent 1px 2px);"></div>
<div class="b" style="left:1655.6px;top:1539.1px;width:11.6px;height:18.8px;background:#fff;border:1px solid #d6d6d6;border-bottom-color:#bfbfbf;border-radius:4px;"></div>
<span class="t" style="left:1079.6px;top:1563.2px;font-size:14.5px;line-height:14.5px;color:#151515;letter-spacing:-0.230px;">Type Comments</span>
<div class="b" style="left:1077.0px;top:1582.5px;width:591.6px;height:1.0px;background:repeating-linear-gradient(90deg,#8e8e8e 0 1px,transparent 1px 2px);"></div>
<div class="b" style="left:1353.5px;top:1560.1px;width:1.0px;height:23.2px;background:repeating-linear-gradient(180deg,#8e8e8e 0 1px,transparent 1px 2px);"></div>
<div class="b" style="left:1653.0px;top:1560.1px;width:1.0px;height:23.2px;background:repeating-linear-gradient(180deg,#8e8e8e 0 1px,transparent 1px 2px);"></div>
<div class="b" style="left:1668.1px;top:1560.1px;width:1.0px;height:23.2px;background:repeating-linear-gradient(180deg,#8e8e8e 0 1px,transparent 1px 2px);"></div>
<div class="b" style="left:1655.6px;top:1562.3px;width:11.6px;height:18.8px;background:#fff;border:1px solid #d6d6d6;border-bottom-color:#bfbfbf;border-radius:4px;"></div>
<span class="t" style="left:1079.6px;top:1586.4px;font-size:14.5px;line-height:14.5px;color:#151515;letter-spacing:-2.005px;">URL</span>
<span class="t" style="left:1356.6px;top:1586.4px;font-size:14.5px;line-height:14.5px;color:#151515;letter-spacing:0.238px;">https://rdstudio.co/</span>
<div class="b" style="left:1077.0px;top:1605.7px;width:591.6px;height:1.0px;background:repeating-linear-gradient(90deg,#8e8e8e 0 1px,transparent 1px 2px);"></div>
<div class="b" style="left:1353.5px;top:1583.3px;width:1.0px;height:23.2px;background:repeating-linear-gradient(180deg,#8e8e8e 0 1px,transparent 1px 2px);"></div>
<div class="b" style="left:1653.0px;top:1583.3px;width:1.0px;height:23.2px;background:repeating-linear-gradient(180deg,#8e8e8e 0 1px,transparent 1px 2px);"></div>
<div class="b" style="left:1668.1px;top:1583.3px;width:1.0px;height:23.2px;background:repeating-linear-gradient(180deg,#8e8e8e 0 1px,transparent 1px 2px);"></div>
<div class="b" style="left:1655.6px;top:1585.5px;width:11.6px;height:18.8px;background:#fff;border:1px solid #d6d6d6;border-bottom-color:#bfbfbf;border-radius:4px;"></div>
<div class="b" style="left:1655.6px;top:1608.7px;width:11.6px;height:4.0px;background:#fff;border:1px solid #d6d6d6;border-bottom:none;border-radius:4px 4px 0 0;"></div>
<svg width="1800" height="1800"><path d="M1656.8 1202.9l2.7-2.7 2.7 2.7M1656.8 1207.3l2.7-2.7 2.7 2.7" stroke="#111" stroke-width="1.25" fill="none"/><path d="M1656.8 1254.4l2.7-2.7 2.7 2.7M1656.8 1258.8l2.7-2.7 2.7 2.7" stroke="#111" stroke-width="1.25" fill="none"/><path d="M1656.8 1305.9l2.7-2.7 2.7 2.7M1656.8 1310.3l2.7-2.7 2.7 2.7" stroke="#111" stroke-width="1.25" fill="none"/><path d="M1656.8 1379.9l2.7-2.7 2.7 2.7M1656.8 1384.3l2.7-2.7 2.7 2.7" stroke="#111" stroke-width="1.25" fill="none"/></svg>
<div class="b" style="left:1678.0px;top:1186.0px;width:3.0px;height:177.0px;background:#808080;border-radius:1.5px;"></div>
<a class="t" style="left:1075.6px;top:1627.5px;font-size:12.4px;line-height:12.4px;color:#0f62c8;letter-spacing:-0.010px;text-decoration:underline;text-decoration-thickness:1px;text-underline-offset:1.5px;text-decoration-skip-ink:none;">What do these properties do?</a>
<div class="b" style="left:1075.0px;top:1664.6px;width:98.0px;height:25.8px;background:#fdfdfd;border:1px solid #d5d5d5;border-bottom-color:#bdbdbd;border-radius:4px;"></div>
<span class="t" style="left:1092.4px;top:1671.5px;font-size:12.4px;line-height:12.4px;color:#1a1a1a;letter-spacing:0.174px;">&lt;&lt; Preview</span>
<div class="b" style="left:1377.6px;top:1664.6px;width:98.0px;height:25.8px;background:#fdfdfd;border:1px solid #d5d5d5;border-bottom-color:#bdbdbd;border-radius:4px;"></div>
<span class="t" style="left:1418.6px;top:1671.5px;font-size:12.4px;line-height:12.4px;color:#1a1a1a;letter-spacing:-2.916px;">OK</span>
<div class="b" style="left:1485.6px;top:1664.6px;width:98.0px;height:25.8px;background:#fdfdfd;border:1px solid #d5d5d5;border-bottom-color:#bdbdbd;border-radius:4px;"></div>
<span class="t" style="left:1516.4px;top:1671.5px;font-size:12.4px;line-height:12.4px;color:#1a1a1a;letter-spacing:-0.520px;">Cancel</span>
<div class="b" style="left:1594.0px;top:1664.6px;width:98.0px;height:25.8px;background:#f4f4f4;border:1px solid #e6e6e6;border-radius:4px;"></div>
<span class="t" style="left:1628.4px;top:1671.5px;font-size:12.4px;line-height:12.4px;color:#8c8c8c;letter-spacing:-0.355px;">Apply</span>
<svg width="1800" height="1800"><g fill="#b5b5b5"><rect x="1700" y="1693.5" width="1.6" height="1.6"/><rect x="1697" y="1696.5" width="1.6" height="1.6"/><rect x="1700" y="1696.5" width="1.6" height="1.6"/><rect x="1694" y="1699.5" width="1.6" height="1.6"/><rect x="1697" y="1699.5" width="1.6" height="1.6"/><rect x="1700" y="1699.5" width="1.6" height="1.6"/></g></svg>
<svg width="1800" height="1800" style="pointer-events:none"><defs>
<pattern id="wm" x="4.0" y="12.3" width="69.07" height="69.07" patternUnits="userSpaceOnUse">
<text x="1" y="18.2" font-family="Liberation Sans, Arial, sans-serif" font-weight="700" font-size="20.5" textLength="24.4" lengthAdjust="spacingAndGlyphs" fill="#000" fill-opacity=".038">RD</text>
<path d="M28.5 27.5l39 37M67.500 27.5l-39 37" stroke="#000" stroke-opacity=".016" stroke-width="1.1" fill="none"/>
</pattern></defs><rect width="1800" height="1800" fill="url(#wm)"/></svg>
</body></html>
